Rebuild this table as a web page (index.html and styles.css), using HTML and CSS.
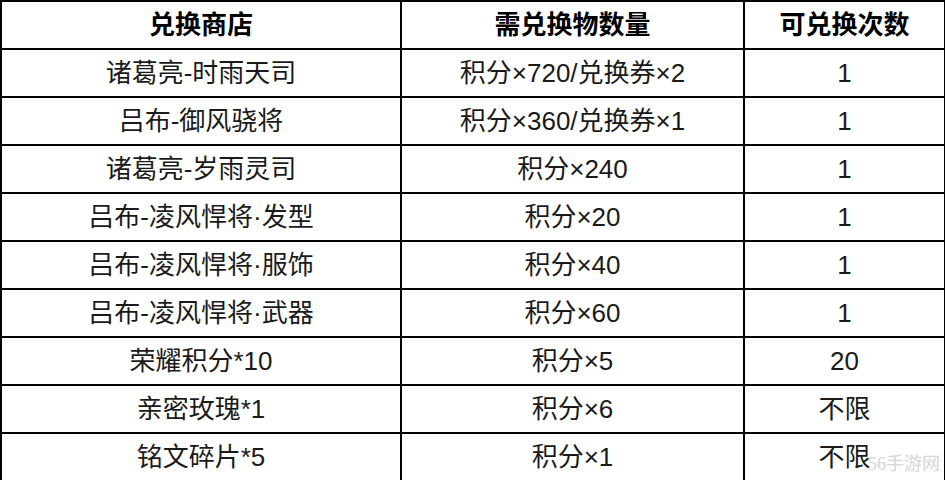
FILE: index.html
```html
<!DOCTYPE html>
<html lang="zh-CN">
<head>
<meta charset="utf-8">
<link rel="stylesheet" href="styles.css">
</head>
<body>
<div class="wrap">
<table class="tbl">
<colgroup><col class="c1"><col class="c2"><col class="c3"></colgroup>
<thead>
<tr><th>兑换商店</th><th>需兑换物数量</th><th>可兑换次数</th></tr>
</thead>
<tbody>
<tr><td>诸葛亮-时雨天司</td><td>积分×720/兑换券×2</td><td>1</td></tr>
<tr><td>吕布-御风骁将</td><td>积分×360/兑换券×1</td><td>1</td></tr>
<tr><td>诸葛亮-岁雨灵司</td><td>积分×240</td><td>1</td></tr>
<tr><td>吕布-凌风悍将·发型</td><td>积分×20</td><td>1</td></tr>
<tr><td>吕布-凌风悍将·服饰</td><td>积分×40</td><td>1</td></tr>
<tr><td>吕布-凌风悍将·武器</td><td>积分×60</td><td>1</td></tr>
<tr><td>荣耀积分*10</td><td>积分×5</td><td>20</td></tr>
<tr><td>亲密玫瑰*1</td><td>积分×6</td><td>不限</td></tr>
<tr><td>铭文碎片*5</td><td>积分×1</td><td>不限</td></tr>
</tbody>
</table>
<div class="mark">56手游网</div>
</div>
</body>
</html>
```
FILE: styles.css
```css
html, body {
  margin: 0;
  padding: 0;
  background: #fff;
}
.wrap {
  position: relative;
  width: 945px;
  height: 480px;
  overflow: hidden;
}
.tbl {
  border-collapse: collapse;
  table-layout: fixed;
  width: 944px;
  font-family: "Liberation Sans", "Noto Sans CJK SC", sans-serif;
  font-size: 26px;
  color: #1a1a1a;
}
.c1 { width: 400px; }
.c2 { width: 343px; }
.c3 { width: 201px; }
.tbl th, .tbl td {
  border: 2px solid #000;
  height: 46px;
  padding: 0;
  text-align: center;
  vertical-align: middle;
  line-height: 1;
}
.tbl th {
  font-weight: bold;
  color: #000;
}
.mark {
  position: absolute;
  right: 5px;
  bottom: 5px;
  font-family: "Liberation Serif", "Noto Sans CJK SC", serif;
  font-size: 18px;
  color: #d6d6d6;
}
```
